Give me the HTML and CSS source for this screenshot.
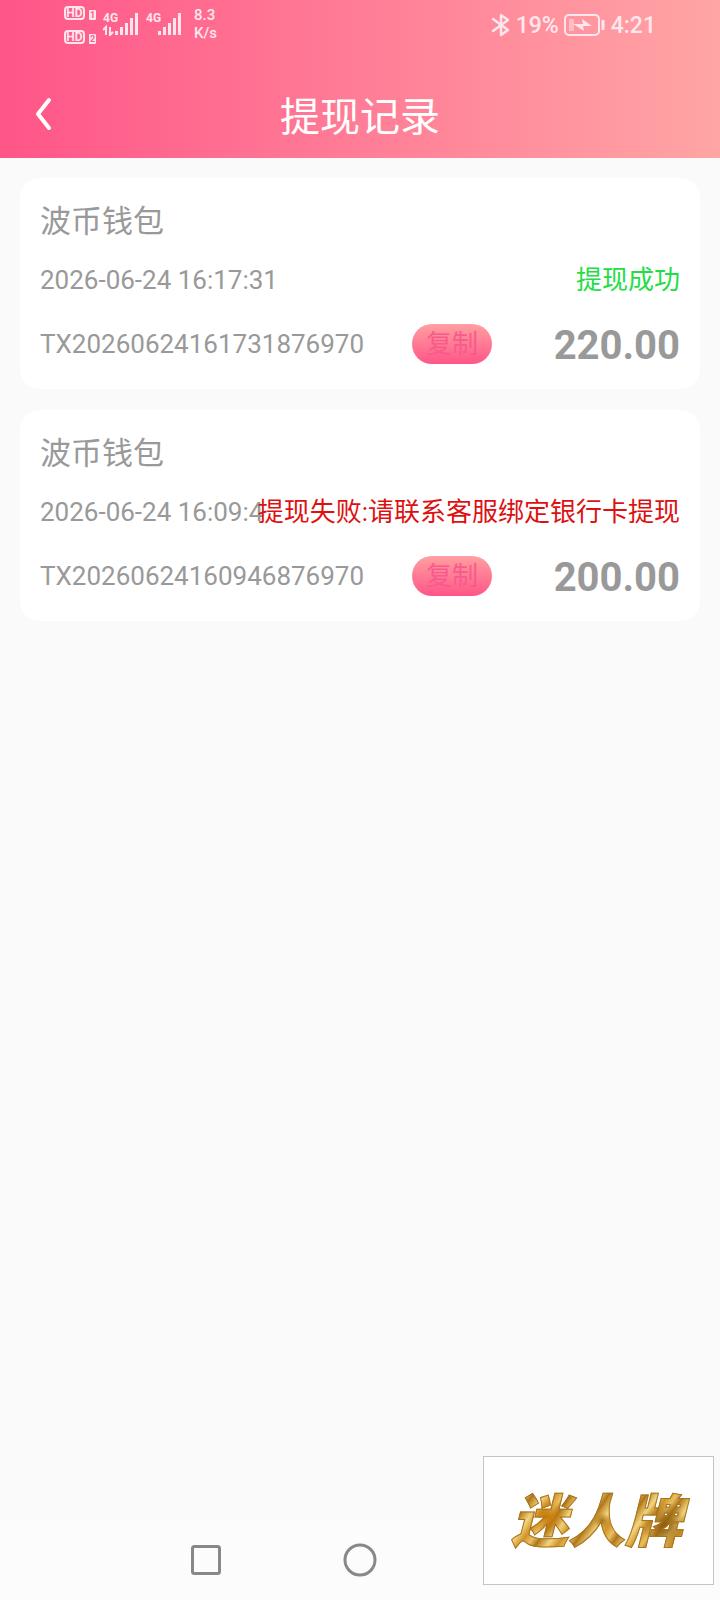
FILE: index.html
```html
<!DOCTYPE html>
<html lang="zh-CN">
<head>
    <meta charset="UTF-8">
    <meta name="viewport" content="width=device-width, initial-scale=1.0">
    <title>提现记录</title>
    <link rel="stylesheet" href="styles.css">
</head>
<body>
    <header>
        <div class="status-bar">
            <div class="status-left">
                <div class="hd-list">
                    <div class="hd"><span class="hd-box">HD</span><span class="hd-num">1</span></div>
                    <div class="hd"><span class="hd-box">HD</span><span class="hd-num">2</span></div>
                </div>
                <div class="signal">
                    <span class="net">4G</span>
                    <svg width="36" height="24" viewBox="0 0 36 24">
                        <path d="M0 18l3-3v8M7 15v8l3-3" fill="none" stroke="currentColor" stroke-width="2"/>
                        <path d="M12 19h3v4h-3zM17 15h3v8h-3zM22 11h3v12h-3zM27 6h3v17h-3zM32 1h3v22h-3z" fill="currentColor"/>
                    </svg>
                </div>
                <div class="signal">
                    <span class="net">4G</span>
                    <svg width="36" height="24" viewBox="0 0 36 24">
                        <path d="M12 19h3v4h-3zM17 15h3v8h-3zM22 11h3v12h-3zM27 6h3v17h-3zM32 1h3v22h-3z" fill="currentColor"/>
                    </svg>
                </div>
                <div class="speed">8.3<br>K/s</div>
            </div>
            <div class="status-right">
                <svg width="20" height="24" viewBox="0 0 20 24">
                    <path d="M2 6l15 11-7 5V2l7 5L2 18" fill="none" stroke="currentColor" stroke-width="2.5" stroke-linejoin="round" stroke-linecap="round"/>
                </svg>
                <span>19%</span>
                <svg width="42" height="22" viewBox="0 0 42 22">
                    <rect x="1" y="1" width="34" height="20" rx="4" fill="none" stroke="currentColor" stroke-width="2"/>
                    <rect x="5" y="5" width="5" height="12" fill="currentColor" opacity=".5"/>
                    <path d="M9 10h10l-1-5 10 7h-9l1 5z" fill="currentColor"/>
                    <path d="M39 6v10" stroke="currentColor" stroke-width="3"/>
                </svg>
                <span>4:21</span>
            </div>
        </div>
        <div class="title-bar">
            <button class="back" type="button" aria-label="返回">
                <svg width="18" height="34" viewBox="0 0 18 34">
                    <path d="M15 3L4 17l11 14" fill="none" stroke="currentColor" stroke-width="4" stroke-linecap="round" stroke-linejoin="round"/>
                </svg>
            </button>
            <h1>提现记录</h1>
        </div>
    </header>
    <main>
        <section class="card">
            <h2>波币钱包</h2>
            <div class="meta">
                <span class="date">2026-06-24 16:17:31</span>
                <span class="success">提现成功</span>
            </div>
            <div class="order">
                <span>TX20260624161731876970</span>
                <button class="copy" type="button">复制</button>
                <strong class="amount">220.00</strong>
            </div>
        </section>
        <section class="card">
            <h2>波币钱包</h2>
            <div class="meta">
                <span class="date">2026-06-24 16:09:4</span>
                <span class="fail">提现失败:请联系客服绑定银行卡提现</span>
            </div>
            <div class="order">
                <span>TX20260624160946876970</span>
                <button class="copy" type="button">复制</button>
                <strong class="amount">200.00</strong>
            </div>
        </section>
    </main>
    <nav>
        <button type="button" aria-label="最近任务">
            <svg width="34" height="34" viewBox="0 0 34 34">
                <rect x="3.5" y="3.5" width="27" height="27" rx="2" fill="none" stroke="currentColor" stroke-width="3"/>
            </svg>
        </button>
        <button type="button" aria-label="主屏幕">
            <svg width="34" height="34" viewBox="0 0 34 34">
                <circle cx="17" cy="17" r="15" fill="none" stroke="currentColor" stroke-width="3"/>
            </svg>
        </button>
        <button type="button" aria-label="返回上一页">
            <svg width="34" height="34" viewBox="0 0 34 34">
                <path d="M28 3v28L5 17z" fill="none" stroke="currentColor" stroke-width="3" stroke-linejoin="round"/>
            </svg>
        </button>
    </nav>
    <div class="brand"><span>迷人牌</span></div>
</body>
</html>
```

FILE: styles.css
```css
* {
    box-sizing: border-box;
}
body {
    margin: 0;
    min-height: 100vh;
    display: flex;
    flex-direction: column;
    background: #fafafa;
    color: #999;
    font-family: Roboto, "Noto Sans CJK SC", sans-serif;
}
button {
    border: 0;
    padding: 0;
    background: none;
    color: inherit;
    font: inherit;
    cursor: pointer;
}
svg {
    display: block;
}
header {
    background: linear-gradient(to right, #ff5588, #ffa5a5);
    color: #fff;
}

/* phone status bar */
.status-bar {
    display: flex;
    justify-content: space-between;
    height: 76px;
    padding: 0 64px;
    color: #ffe6ec;
}
.status-left {
    display: flex;
    align-items: flex-start;
    gap: 7px;
    padding-top: 6px;
}
.hd-list {
    display: grid;
    gap: 10px;
}
.hd {
    display: flex;
    align-items: flex-end;
    gap: 4px;
}
.hd-box {
    width: 21px;
    border: 2px solid;
    border-radius: 4px;
    font-size: 12px;
    font-weight: 700;
    line-height: 10px;
    text-align: center;
}
.hd-num {
    width: 7px;
    border-radius: 1px;
    background: #ffe6ec;
    color: #ff5f8b;
    font-size: 9px;
    font-weight: 700;
    line-height: 10px;
    text-align: center;
}
.signal {
    display: grid;
    padding-top: 6px;
}
.signal .net,
.signal svg {
    grid-area: 1 / 1;
}
.net {
    font-size: 12px;
    font-weight: 700;
    line-height: 12px;
}
.speed {
    padding-left: 5px;
    font-size: 15px;
    font-weight: 500;
    line-height: 18px;
}
.status-right {
    display: flex;
    align-items: center;
    gap: 5px;
    height: 50px;
    font-size: 23px;
    font-weight: 500;
}

.title-bar {
    display: grid;
    grid-template-columns: 56px 1fr 56px;
    align-items: center;
    height: 82px;
}
.back {
    display: flex;
    justify-content: flex-end;
    padding: 0 4px 6px;
}
h1 {
    margin: 0;
    padding-top: 2px;
    font-size: 40px;
    font-weight: 400;
    line-height: 80px;
    text-align: center;
}

main {
    flex: 1;
    padding: 20px;
}
.card {
    padding: 22px 20px 18px;
    border-radius: 20px;
    background: #fff;
}
.card + .card {
    margin-top: 21px;
}
h2 {
    margin: 0;
    font-size: 31px;
    font-weight: 400;
    line-height: 44px;
}
/* a long state text runs over the end of the date */
.meta {
    display: flex;
    justify-content: space-between;
    font-size: 26px;
    line-height: 72px;
    white-space: nowrap;
}
.date {
    min-width: 0;
}
.success {
    color: #22dd44;
}
.fail {
    color: #dd1111;
}
.order {
    display: flex;
    align-items: center;
    height: 55px;
    font-size: 26px;
}
.copy {
    width: 80px;
    height: 40px;
    margin-left: 48px;
    border-radius: 20px;
    background: linear-gradient(#ffa0a0, #ff5588);
    color: #f95a8c;
    line-height: 40px;
}
.amount {
    margin-left: auto;
    padding-top: 3px;
    font-size: 40px;
    font-weight: 700;
}

nav {
    display: flex;
    justify-content: center;
    align-items: center;
    gap: 120px;
    height: 80px;
    background: #fcfcfc;
    color: #888;
}

/* floating brand box */
.brand {
    position: fixed;
    right: 6px;
    bottom: 15px;
    display: flex;
    justify-content: center;
    align-items: center;
    width: 231px;
    height: 129px;
    border: 1px solid #c4c4c4;
    background: #fff;
}
.brand span {
    padding: 4px 8px 0 4px;
    background:
        radial-gradient(circle at 22% 45%, #c87a08 0, transparent 12%),
        radial-gradient(circle at 52% 50%, #a87010 0, transparent 8%),
        radial-gradient(circle at 86% 55%, #906010 0, transparent 14%),
        repeating-linear-gradient(125deg, #b98020 0, #f2d580 9px, #d09428 17px, #eac060 24px, #a87018 31px);
    -webkit-background-clip: text;
    background-clip: text;
    color: transparent;
    font-size: 57px;
    font-style: italic;
    font-weight: 900;
    line-height: 80px;
    -webkit-text-stroke: 1px #a87420;
}
```
